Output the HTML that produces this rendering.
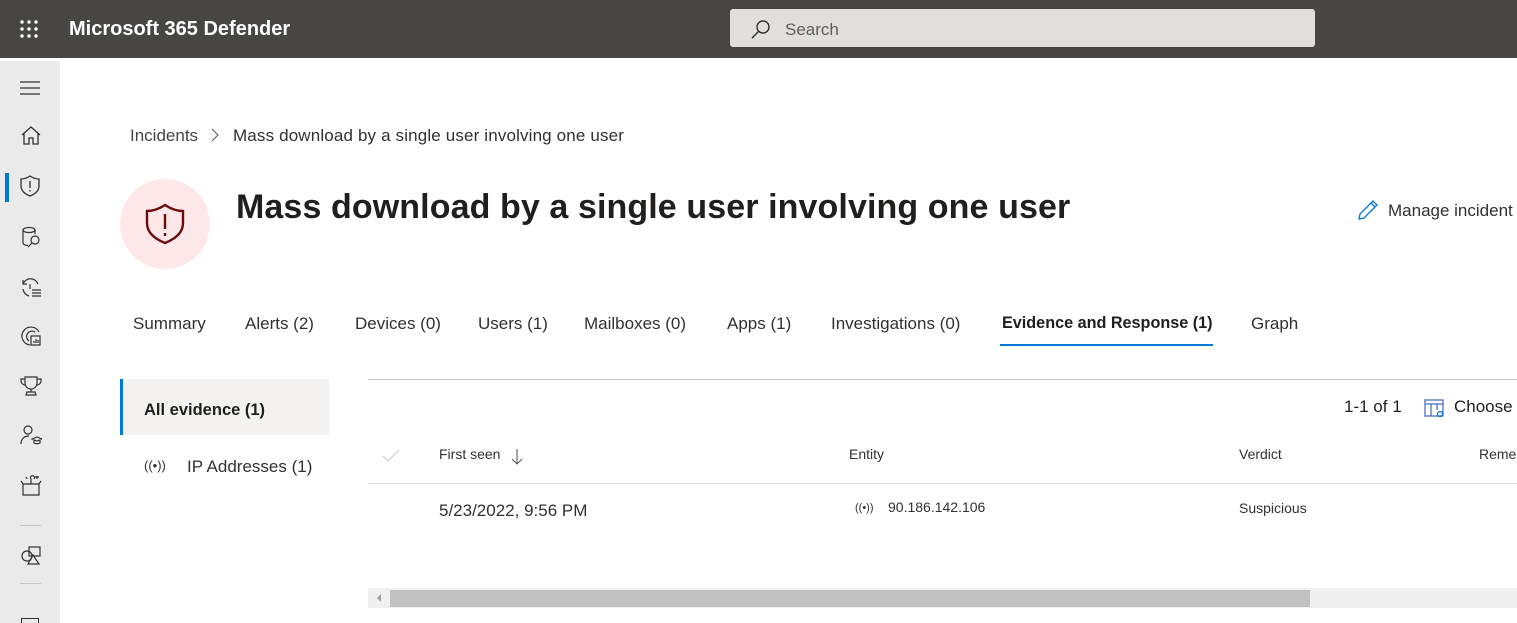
<!DOCTYPE html>
<html><head><meta charset="utf-8"><style>
*{margin:0;padding:0;box-sizing:border-box}
body{width:1517px;height:623px;overflow:hidden;background:#fff;font-family:"Liberation Sans",sans-serif;color:#323130;position:relative}
.a{position:absolute;white-space:nowrap}
.top{position:absolute;left:0;top:0;width:1517px;height:58px;background:#484644}
.side{position:absolute;left:0;top:61px;width:60px;height:562px;background:#eaeaea}
.tab{position:absolute;top:314px;font-size:17px;color:#323130}
svg{position:absolute}
</style></head><body>
<div class="top"></div>
<svg style="left:19px;top:19px" width="20" height="20" viewBox="0 0 20 20" fill="#fff">
<circle cx="3" cy="3" r="1.7"/><circle cx="10" cy="3" r="1.7"/><circle cx="17" cy="3" r="1.7"/>
<circle cx="3" cy="10" r="1.7"/><circle cx="10" cy="10" r="1.7"/><circle cx="17" cy="10" r="1.7"/>
<circle cx="3" cy="17" r="1.7"/><circle cx="10" cy="17" r="1.7"/><circle cx="17" cy="17" r="1.7"/></svg>
<div class="a" style="left:69px;top:18px;color:#fff;font-size:20px;font-weight:bold">Microsoft 365 Defender</div>
<div class="a" style="left:730px;top:9px;width:585px;height:38px;background:#e1dfdd;border-radius:3px"></div>
<svg style="left:750px;top:19px" width="22" height="22" viewBox="0 0 22 22" fill="none" stroke="#323130" stroke-width="1.4"><circle cx="13" cy="8" r="6"/><path d="M8.5 12.5L2 19"/></svg>
<div class="a" style="left:785px;top:20px;font-size:17px;color:#605e5c">Search</div>
<div class="side"></div>
<div class="a" style="left:5px;top:173px;width:4px;height:29px;background:#0078d4"></div>
<svg style="left:19px;top:80px" width="22" height="16"><path d="M1 2h20M1 8h20M1 14h20" stroke="#323130" stroke-width="1.2"/></svg>
<svg style="left:20px;top:125px" width="22" height="22" viewBox="0 0 22 22" fill="none" stroke="#323130" stroke-width="1.3"><path d="M2 10L11 2l9 8M4 8v11h5v-6h4v6h5V8"/></svg>
<svg style="left:20px;top:175px" width="20" height="22" viewBox="0 0 20 22" fill="none" stroke="#323130" stroke-width="1.3"><path d="M10 1C7 3 4 4 1 4v7c0 5 4 8 9 10 5-2 9-5 9-10V4c-3 0-6-1-9-3z"/><path d="M10 6v7M10 15v1.5"/></svg>
<svg style="left:21px;top:226px" width="22" height="22" viewBox="0 0 22 22" fill="none" stroke="#323130" stroke-width="1.2"><ellipse cx="8" cy="4" rx="6" ry="2.5"/><path d="M2 4v13c0 1.5 3 2.5 5 2.5M14 4v4"/><circle cx="14" cy="14" r="4"/><path d="M11 17l-4 4"/></svg>
<svg style="left:20px;top:276px" width="22" height="22" viewBox="0 0 22 22" fill="none" stroke="#323130" stroke-width="1.2"><path d="M3 8a8 8 0 0 1 15 0M3 4v4h4M10 8v5M12 14h9M12 17h9M12 20h9M3 13a8 8 0 0 0 6 7"/></svg>
<svg style="left:20px;top:325px" width="22" height="22" viewBox="0 0 22 22" fill="none" stroke="#323130" stroke-width="1.2"><path d="M19 7a9 9 0 1 0-9 13M15 7a5 5 0 1 0-6 9"/><rect x="11" y="11" width="9" height="9"/><path d="M14 18v-2M16 18v-4M18 18v-3"/></svg>
<svg style="left:20px;top:375px" width="22" height="22" viewBox="0 0 22 22" fill="none" stroke="#323130" stroke-width="1.2"><path d="M5 2h12v6a6 6 0 0 1-12 0zM5 4H1v2c0 2 2 4 4 4M17 4h4v2c0 2-2 4-4 4M11 14v3M6 20h10l-1-3H7z"/></svg>
<svg style="left:20px;top:424px" width="22" height="22" viewBox="0 0 22 22" fill="none" stroke="#323130" stroke-width="1.2"><circle cx="8" cy="6" r="4"/><path d="M1 20c0-5 3-8 8-8M12 15l5-2 5 2-5 2zM14 16v3c2 1 4 1 6 0v-3"/></svg>
<svg style="left:20px;top:474px" width="22" height="22" viewBox="0 0 22 22" fill="none" stroke="#323130" stroke-width="1.2"><path d="M3 10h16v11H3zM3 10l-2-3M19 10l2-3M11 10V5a2 2 0 1 1 3 0M6 3l1 2M17 2v3M15 3h4"/></svg>
<div class="a" style="left:20px;top:525px;width:21px;height:1px;background:#c8c6c4"></div>
<svg style="left:20px;top:545px" width="22" height="22" viewBox="0 0 22 22" fill="none" stroke="#323130" stroke-width="1.2"><circle cx="7" cy="11" r="5"/><rect x="9" y="2" width="11" height="9"/><path d="M13 10l-5 9h11z"/></svg>
<div class="a" style="left:20px;top:583px;width:21px;height:1px;background:#c8c6c4"></div>
<div class="a" style="left:21px;top:618px;width:18px;height:5px;border:1.2px solid #323130;border-bottom:none"></div>

<div class="a" style="left:130px;top:126px;font-size:17px;color:#484644">Incidents</div>
<svg style="left:210px;top:128px" width="10" height="14"><path d="M2 1l6 6-6 6" fill="none" stroke="#605e5c" stroke-width="1.1"/></svg>
<div class="a" style="left:233px;top:126px;font-size:17px;color:#323130;letter-spacing:0.15px">Mass download by a single user involving one user</div>
<div class="a" style="left:120px;top:179px;width:90px;height:90px;border-radius:50%;background:#fde7e9"></div>
<svg style="left:145px;top:203px" width="40" height="42" viewBox="0 0 40 42" fill="none" stroke="#6b0d0d" stroke-width="2.4"><path d="M20 2C14 6 8 8 2 8v12c0 10 8 16 18 20 10-4 18-10 18-20V8C32 8 26 6 20 2z"/><path d="M20 11v15M20 30v3"/></svg>
<div class="a" style="left:236px;top:188px;font-size:34px;font-weight:bold;color:#201f1e;letter-spacing:0.1px">Mass download by a single user involving one user</div>
<svg style="left:1357px;top:199px" width="22" height="22" viewBox="0 0 22 22" fill="none" stroke="#0078d4" stroke-width="1.3"><path d="M2 20l1-5L16 2l4 4L7 19zM14 4l4 4"/></svg>
<div class="a" style="left:1388px;top:201px;font-size:17px">Manage incident</div>

<div class="tab" style="left:133px">Summary</div>
<div class="tab" style="left:245px">Alerts (2)</div>
<div class="tab" style="left:355px">Devices (0)</div>
<div class="tab" style="left:478px">Users (1)</div>
<div class="tab" style="left:584px">Mailboxes (0)</div>
<div class="tab" style="left:727px">Apps (1)</div>
<div class="tab" style="left:831px">Investigations (0)</div>
<div class="tab" style="left:1002px;font-weight:bold;color:#201f1e;font-size:16.2px">Evidence and Response (1)</div>
<div class="tab" style="left:1251px">Graph</div>
<div class="a" style="left:1000px;top:344px;width:213px;height:2px;background:#0078d4"></div>

<div class="a" style="left:120px;top:379px;width:209px;height:56px;background:#f3f2f1"></div>
<div class="a" style="left:120px;top:379px;width:3px;height:56px;background:#0078d4"></div>
<div class="a" style="left:144px;top:401px;font-size:16.5px;font-weight:bold;color:#201f1e">All evidence (1)</div>
<div class="a" style="left:144px;top:458px;font-size:13px">((•))</div>
<div class="a" style="left:187px;top:457px;font-size:17px">IP Addresses (1)</div>

<div class="a" style="left:368px;top:379px;width:1149px;height:1px;background:#c8c6c4"></div>
<div class="a" style="left:1344px;top:397px;font-size:17px;color:#201f1e">1-1 of 1</div>
<svg style="left:1424px;top:399px" width="22" height="20" viewBox="0 0 22 20" fill="none" stroke="#4a6fc0" stroke-width="1.3"><rect x="1" y="1" width="18" height="16"/><path d="M1 5h18M7 5v12M13 5v6"/><circle cx="16" cy="15" r="2.5" stroke="#0078d4"/></svg>
<div class="a" style="left:1454px;top:397px;font-size:17px;color:#201f1e">Choose</div>
<svg style="left:382px;top:449px" width="18" height="14"><path d="M1 7l5 5 11-11" fill="none" stroke="#c8c6c4" stroke-width="1"/></svg>
<div class="a" style="left:439px;top:446px;font-size:14px">First seen</div>
<svg style="left:511px;top:448px" width="12" height="18"><path d="M6 1v15M1 11l5 5 5-5" fill="none" stroke="#605e5c" stroke-width="1.1"/></svg>
<div class="a" style="left:849px;top:446px;font-size:14px">Entity</div>
<div class="a" style="left:1239px;top:446px;font-size:14px">Verdict</div>
<div class="a" style="left:1479px;top:446px;font-size:14px">Remed</div>
<div class="a" style="left:368px;top:483px;width:1149px;height:1px;background:#e1dfdd"></div>
<div class="a" style="left:439px;top:501px;font-size:17px">5/23/2022, 9:56 PM</div>
<div class="a" style="left:855px;top:502px;font-size:11px">((•))</div>
<div class="a" style="left:888px;top:499px;font-size:14px">90.186.142.106</div>
<div class="a" style="left:1239px;top:500px;font-size:14px">Suspicious</div>
<div class="a" style="left:368px;top:588px;width:1149px;height:20px;background:#f0f0f0"></div>
<div class="a" style="left:390px;top:590px;width:920px;height:17px;background:#c1c1c1"></div>
<svg style="left:375px;top:593px" width="8" height="10"><path d="M6 1L2 5l4 4z" fill="#a0a0a0"/></svg>
</body></html>
